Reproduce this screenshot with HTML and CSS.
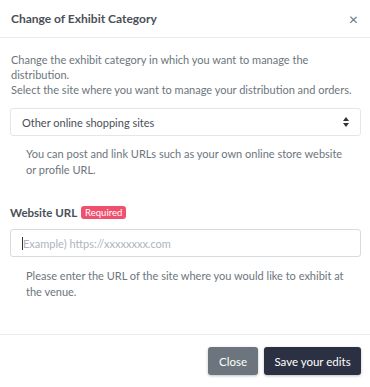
FILE: index.html
```html
<!DOCTYPE html>
<html lang="en">
<head>
  <meta charset="UTF-8">
  <title>Change of Exhibit Category</title>
  <link rel="stylesheet" href="styles.css">
</head>
<body>
  <div class="modal">
    <div class="modal-header">
      <div class="modal-title">Change of Exhibit Category</div>
      <span class="close-x">&times;</span>
    </div>

    <div class="modal-body">
      <p class="intro">
        Change the exhibit category in which you want to manage the distribution.<br>
        Select the site where you want to manage your distribution and orders.
      </p>

      <div class="select-box">
        <span>Other online shopping sites</span>
        <svg width="6" height="10" viewBox="0 0 6 10">
          <path d="M3 0 L6 4 H0 Z" fill="#333"/>
          <path d="M0 6 H6 L3 10 Z" fill="#333"/>
        </svg>
      </div>
      <p class="help">You can post and link URLs such as your own online store website or profile URL.</p>

      <div class="field-label">
        Website URL <span class="badge">Required</span>
      </div>
      <div class="input-box">
        <span class="caret"></span>
        <span class="placeholder">Example) https://xxxxxxxx.com</span>
      </div>
      <p class="help help-url">Please enter the URL of the site where you would like to exhibit at the venue.</p>
    </div>

    <div class="modal-footer">
      <button class="btn btn-close">Close</button>
      <button class="btn btn-save">Save your edits</button>
    </div>
  </div>
</body>
</html>
```

FILE: styles.css
```css
body {
  margin: 0;
  font-family: 'Lato', 'Noto Sans', sans-serif;
  background-color: #fff;
  color: #6c757d;
}

.modal {
  width: 370px;
  height: 387px;
  display: flex;
  flex-direction: column;
}

.modal-header {
  height: 38px;
  box-sizing: border-box;
  padding: 0 11px;
  display: flex;
  align-items: center;
  justify-content: space-between;
  border-bottom: 1px solid #e9ecef;
}

.modal-title {
  font-size: 12px;
  font-weight: 700;
  color: #495057;
}

.close-x {
  font-size: 16px;
  color: #6c757d;
  margin-right: 1px;
}

.modal-body {
  flex: 1;
  padding: 14px 9px 0 10px;
}

.intro {
  margin: 0 0 0 1px;
  font-size: 11px;
  line-height: 15px;
}

.select-box {
  margin-top: 11px;
  height: 28px;
  box-sizing: border-box;
  border: 1px solid #e3e6ea;
  border-radius: 3px;
  padding: 0 11px 0 11px;
  display: flex;
  align-items: center;
  justify-content: space-between;
  font-size: 11px;
  color: #495057;
}

.help {
  margin: 10px 0 0 16px;
  font-size: 11px;
  line-height: 16px;
  padding-right: 14px;
}

.help-url {
  margin-top: 11px;
}

.field-label {
  margin-top: 28px;
  display: flex;
  align-items: center;
  gap: 4px;
  font-size: 11.5px;
  font-weight: 700;
  color: #495057;
}

.badge {
  background-color: #f0506e;
  color: #fff;
  font-size: 9.5px;
  font-weight: 400;
  line-height: 13px;
  padding: 0 4px;
  border-radius: 3px;
}

.input-box {
  margin-top: 10px;
  height: 28px;
  box-sizing: border-box;
  border: 1px solid #d6dbe0;
  border-radius: 3px;
  padding: 0 11px;
  display: flex;
  align-items: center;
  font-size: 11px;
}

.caret {
  width: 1px;
  height: 13px;
  background: #333;
}

.placeholder {
  color: #adb5bd;
}

.modal-footer {
  height: 53px;
  box-sizing: border-box;
  border-top: 1px solid #e9ecef;
  display: flex;
  justify-content: flex-end;
  align-items: flex-start;
  padding: 12px 9px 0 0;
  gap: 6px;
}

.btn {
  height: 28px;
  border: none;
  border-radius: 3px;
  color: #fff;
  font-family: inherit;
  font-size: 11.5px;
  padding: 0;
  white-space: nowrap;
  box-shadow: 0 1px 3px rgba(0,0,0,0.25);
}

.btn-close {
  width: 50px;
  background-color: #6c757d;
}

.btn-save {
  width: 97px;
  background-color: #2b3142;
}
```
